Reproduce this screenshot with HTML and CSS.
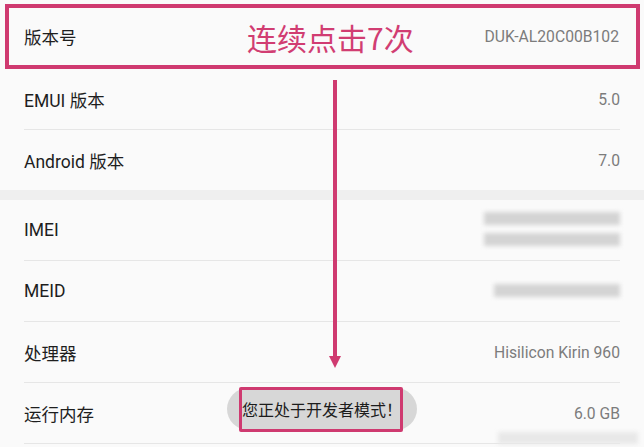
FILE: index.html
```html
<!DOCTYPE html>
<html lang="zh-CN">
<head>
    <meta charset="UTF-8">
    <meta name="viewport" content="width=device-width, initial-scale=1.0">
    <title>关于手机</title>
    <link rel="stylesheet" href="styles.css">
</head>
<body>
    <div class="page">
        <div class="list">
            <div class="row row-marked">
                <span class="label">版本号</span>
                <span class="value">DUK-AL20C00B102</span>
            </div>
            <div class="row">
                <span class="label">EMUI 版本</span>
                <span class="value">5.0</span>
            </div>
            <div class="row no-line">
                <span class="label">Android 版本</span>
                <span class="value">7.0</span>
            </div>
            <div class="gap"></div>
            <div class="row">
                <span class="label">IMEI</span>
                <span class="masked">
                    <i class="bar"></i>
                    <i class="bar"></i>
                </span>
            </div>
            <div class="row">
                <span class="label">MEID</span>
                <span class="masked">
                    <i class="bar bar-short"></i>
                </span>
            </div>
            <div class="row">
                <span class="label">处理器</span>
                <span class="value">Hisilicon Kirin 960</span>
            </div>
            <div class="row">
                <span class="label">运行内存</span>
                <span class="value">6.0 GB</span>
            </div>
        </div>

        <!-- annotations over the screenshot -->
        <div class="tap-note">连续点击7次</div>
        <svg class="arrow" width="12" height="290" viewBox="0 0 12 290">
            <line x1="6" y1="0" x2="6" y2="280" stroke="#cf3a70" stroke-width="4"/>
            <polygon points="0,276 12,276 6,288" fill="#cf3a70"/>
        </svg>
        <div class="toast">您正处于开发者模式！</div>
        <div class="toast-frame"></div>
        <div class="watermark"></div>
    </div>
</body>
</html>
```

FILE: styles.css
```css
body {
    margin: 0;
    padding: 0;
    background-color: #fafafa;
    font-family: Roboto, "Noto Sans CJK SC", sans-serif;
    overflow: hidden;
}

.page {
    position: relative;
    width: 644px;
    height: 447px;
}

.list {
    display: flex;
    flex-direction: column;
}

.row {
    display: flex;
    justify-content: space-between;
    align-items: center;
    height: 61px;
    margin: 0 24px;
    border-bottom: 1px solid #e6e6e6;
    box-sizing: border-box;
}

.row.no-line {
    height: 60px;
    border-bottom: none;
}

.row-marked {
    height: 65px;
    margin: 4px 4px 0 5px;
    padding: 0 17px 0 15px;
    border: 4px solid #cf3a70;
}

.label {
    font-size: 17.5px;
    color: #1e1e1e;
}

.value {
    font-size: 15.7px;
    color: #7c7c7c;
}

.gap {
    height: 10px;
    background-color: #efefef;
}

.masked {
    display: flex;
    flex-direction: column;
    gap: 8px;
    margin-top: -2px;
}

.bar {
    display: block;
    width: 136px;
    height: 13px;
    background-color: #d4d4d4;
    filter: blur(2px);
}

.bar-short {
    width: 126px;
    margin-left: 10px;
}

.tap-note {
    position: absolute;
    left: 247px;
    top: 22px;
    font-size: 30px;
    line-height: 1;
    color: #d13d72;
    font-family: "Noto Sans CJK SC", sans-serif;
}

.arrow {
    position: absolute;
    left: 329px;
    top: 80px;
}

.toast {
    position: absolute;
    left: 227px;
    top: 388px;
    width: 190px;
    height: 42px;
    border-radius: 21px;
    background-color: #d7d7d7;
    display: flex;
    align-items: center;
    justify-content: center;
    font-size: 16px;
    color: #1c1c1c;
    font-family: "Noto Sans CJK SC", sans-serif;
}

.toast-frame {
    position: absolute;
    left: 239px;
    top: 387px;
    width: 164px;
    height: 45px;
    border: 3px solid #cf3a70;
    border-radius: 2px;
    box-sizing: border-box;
}

.watermark {
    position: absolute;
    left: 498px;
    top: 432px;
    width: 140px;
    height: 12px;
    background-color: #e8e8e8;
    filter: blur(2px);
}
```
